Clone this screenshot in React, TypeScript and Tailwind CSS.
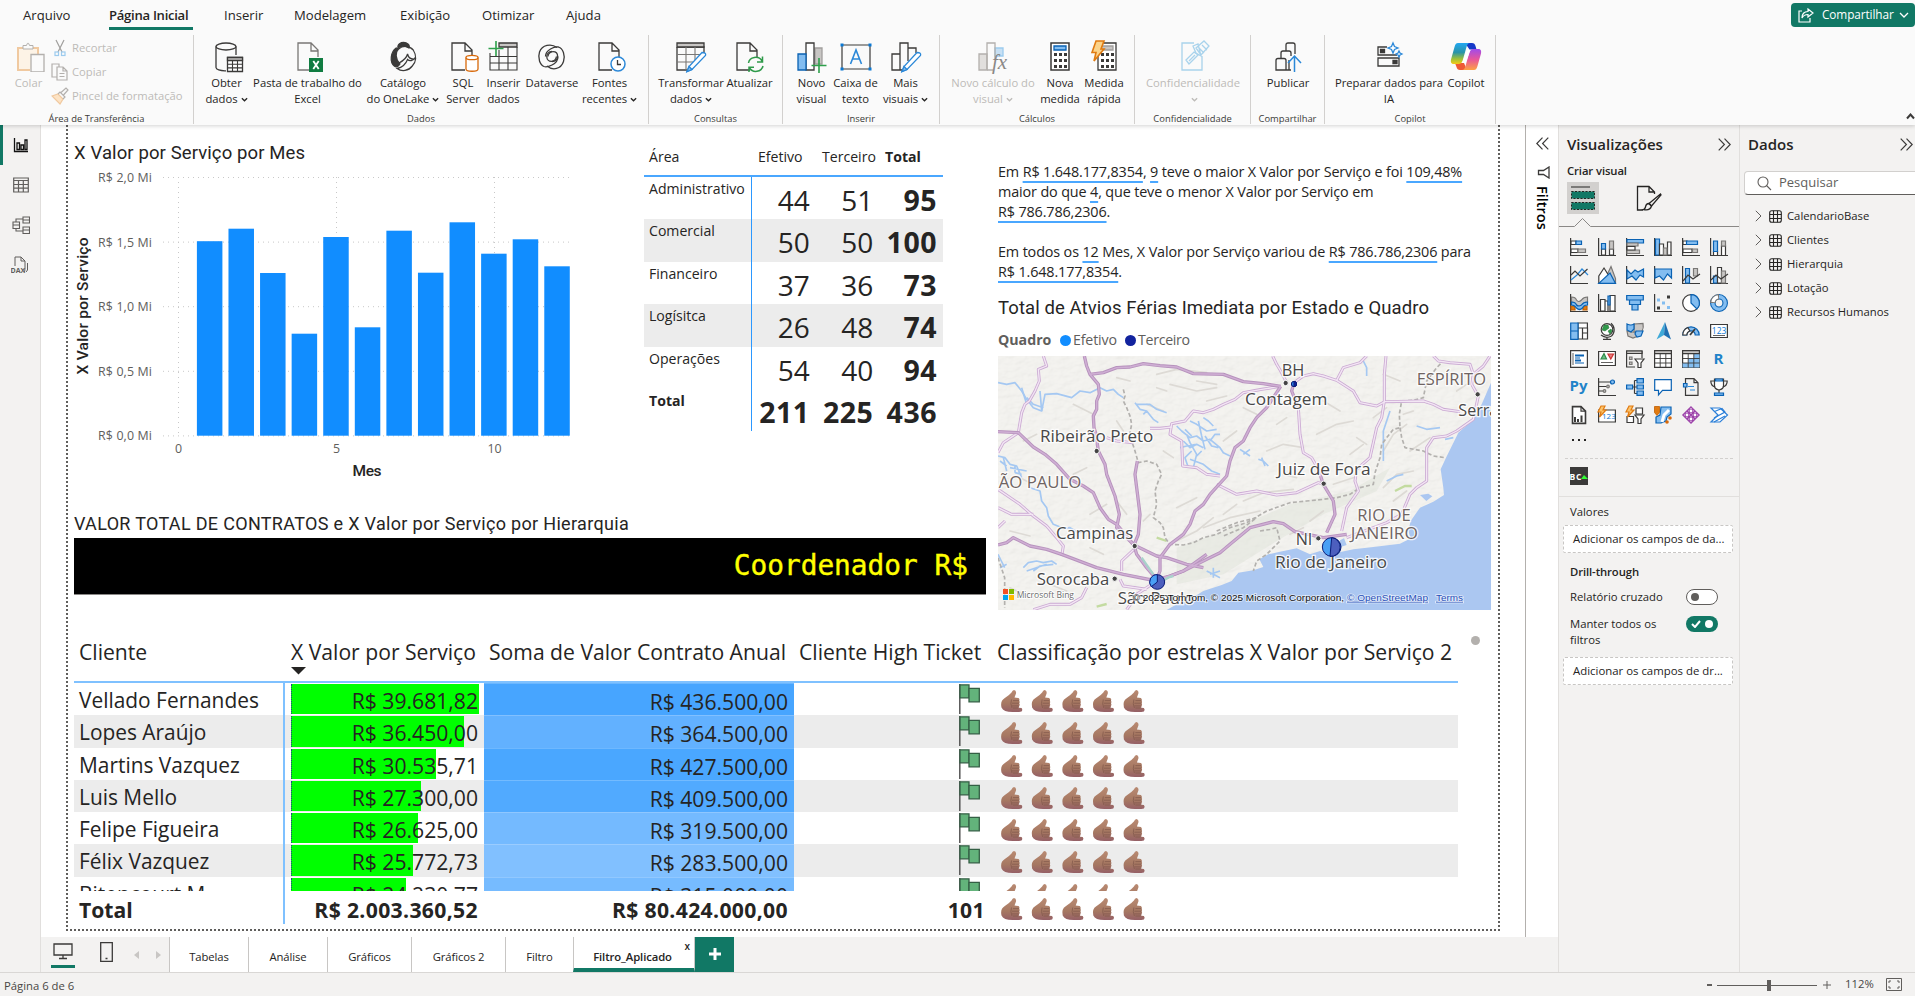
import React from "react";

type Kids = { children?: React.ReactNode };
const D = "#3b3a39";
const B = "#0a62b3";
const LB = "#83bdf0";
const G = "#c8c6c4";

/* ---------- ribbon icons (30 x 30) ---------- */
const R = ({ children }: Kids) => (
  <svg width="30" height="30" viewBox="0 0 30 30" fill="none" stroke={D} strokeWidth="1.3" className="block overflow-visible">
    {children}
  </svg>
);
const Doc = ({ x = 2 }: { x?: number }) => (
  <g transform={`translate(${x} 0)`}>
    <path d="M14 28H1V1h13l7 7v7M14 1v8h7" fill="none" />
  </g>
);
const Pencil = () => (
  <g>
    <path d="M26 10.500l-13 14-2 5 5-2 13.500-14q1-3-3.500-3z" fill="#fff" stroke="#2b88d8" />
    <path d="M11 29.500l2-5 3 3z" fill={LB} stroke="#2b88d8" />
  </g>
);
const icDb = (
  <R>
    <g transform="translate(3 0)">
      <ellipse cx="11" cy="4.500" rx="10" ry="3.500" />
      <path d="M1 4.500v21c0 2 4 3.500 10 3.300M21 4.500V13" />
      <path d="M12.500 15.500h15v14h-15z" fill="#fff" />
      <path d="M12.500 15.500h15v3h-15z" fill={G} />
      <path d="M12.500 22.200h15M12.500 25.900h15M17.500 18.500v11M22.500 18.500v11" strokeWidth="1.100" />
    </g>
  </R>
);
const icXls = (
  <R>
    <g stroke="#797775"><Doc x={4} /></g>
    <rect x="16" y="16" width="14" height="14" fill="#107c41" stroke="none" />
    <path d="M20.300 19l5.400 8M25.700 19l-5.400 8" stroke="#fff" strokeWidth="1.800" />
  </R>
);
const icLake = (
  <R>
    <g transform="translate(1.500 0) scale(.95 1)">
      <path d="M9 6C8 2 12 .5 15 .5s7 2 5.500 5.500C17 3.500 12 3.500 9 6z" fill={D} />
      <path d="M7 6C1 10 0 20 5 24c2 1.500 4 1 6-2C6 17 6 10 9.500 7z" fill={D} />
      <path d="M9.500 7c5-4 12-3 15.500 1 4 6 3 12-1 16-4 5-11 6-16 2.500 5-1 9-4 11-9 2 2 6 1.500 8-2M10 21c4-2 8-5 9-9 1 4 3 5.500 7.500 5" />
    </g>
  </R>
);
const icSql = (
  <R>
    <g transform="translate(3 0)">
      <Doc x={0} />
      <path d="M15 15.500v11.500c0 3 12 3 12 0V15.500" fill="#fff" stroke="#d8690a" />
      <ellipse cx="21" cy="15.500" rx="6" ry="2.200" fill="#fff" stroke="#d8690a" />
    </g>
  </R>
);
const icInsert = (
  <R>
    <path d="M10 1h18v4H10z" fill={G} />
    <path d="M1 11v17h27V5M1 14.500h27M1 21h27M10 8v20M19 5v23" strokeWidth="1.100" />
    <path d="M7-1v15M-.5 6.500h15" stroke="#2ea04b" strokeWidth="1.600" />
  </R>
);
const icVerse = (
  <R>
    <path d="M15 9.500c-3.500 0-5.200 2.600-5.200 5.200s2 4.600 4.600 4.600 5-2.200 5-4.800" />
    <path d="M15 19.500c3.500 0 5.600-2.300 5.600-5.200S18.500 9.700 16 9.700s-5 2.200-5 4.800" />
    <path d="M20 5.500C14 1 5 3 2.500 10c-2 6 .5 13 4.500 14.500 3 1 6-.5 8-1.500 3.500-1.700 6-5 6-8.500" />
    <path d="M10 24c6 5 14 3 16.500-4.500 2-6-.5-13-5-14.500-3-.6-6 .8-8 2-3.500 2-5 4.500-5 7.500" />
  </R>
);
const icRecent = (
  <R>
    <Doc x={3} />
    <circle cx="23" cy="22" r="7" fill="#fff" stroke="#2b88d8" strokeWidth="1.500" />
    <path d="M22.500 18v4.500H26" />
  </R>
);
const icTransform = (
  <R>
    <path d="M1 5h27v10M1 5v23h13" /><path d="M1 1h27v4H1z" fill={G} />
    <path d="M1 12.500h26M1 20h16M10 5v23M19 5v15" stroke="#797775" strokeWidth="1.100" />
    <Pencil />
  </R>
);
const icRefresh = (
  <R>
    <Doc x={1} />
    <path d="M13.500 21c1-6 10-8 13.500-2M27.500 14.500V20H22M28 24c-1.500 6-10 7.500-13.500 2M14 30v-4.700h5" stroke="#2f9a4a" strokeWidth="1.500" fill="none" />
  </R>
);
const icNewVis = (
  <R>
    <path d="M18 6h7v16h-7z" fill={G} stroke="#a19f9d" />
    <path d="M9 1h8v27H9z" fill="#fff" />
    <path d="M1 12h8v16H1z" fill={LB} stroke={B} />
    <path d="M22 16v15M14.500 23.500h15" stroke="#2ea04b" strokeWidth="1.600" />
  </R>
);
const icText = (
  <R>
    <path d="M1 3h28v24H1z" strokeWidth="1.200" />
    <g fill="#0a78d4" stroke="none"><rect x="-.5" y="1.500" width="3" height="3" /><rect x="27.500" y="1.500" width="3" height="3" /><rect x="-.5" y="25.500" width="3" height="3" /><rect x="27.500" y="25.500" width="3" height="3" /></g>
    <path d="M9.500 22L15 8l5.500 14M11.500 17h7" stroke="#2b88d8" strokeWidth="1.600" />
  </R>
);
const icMore = (
  <R>
    <path d="M9 28H1V12h8M9 28V1h8v18M17 6h8v5M9 28h3" />
    <Pencil />
  </R>
);
const icFx = (
  <R>
    <path d="M1 12h8v16H1z" fill="#e1dfdd" stroke="#b3b0ad" />
    <path d="M17 6h8v8h-8z" fill="#c7e0f4" stroke="#9ccbee" />
    <path d="M9 28V1h8v16M9 28h6" stroke="#b3b0ad" fill="none" />
    <text x="14" y="27" fill="#8a8886" stroke="none" className="font-['Liberation_Serif'] text-[21px] italic">fx</text>
  </R>
);
const dots = [0, 1, 2].flatMap((r) => [0, 1, 2].map((c) => <rect key={`${r}${c}`} x={9 + c * 5} y={11 + r * 6} width="3" height="3" fill={D} stroke="none" />));
const icCalc = (
  <R><path d="M6 1h18v27H6z" fill="#fff" strokeWidth="1.500" /><path d="M9 4h12v4H9z" fill={LB} stroke={B} />{dots}</R>
);
const icQuick = (
  <R>
    <path d="M9 1h18v27H9z" fill="#fff" /><path d="M12 4h12v4H12z" fill={G} stroke="#a19f9d" /><g transform="translate(3 0)">{dots}</g>
    <path d="M7-1h8L12 7h3L5 19l2-8.500H3z" fill="#fbd38a" stroke="#e07b12" strokeWidth="1.600" />
  </R>
);
const icConf = (
  <R>
    <path d="M16 1H4v27h20V14" stroke="#a9d3ec" />
    <path d="M8 18l8-8 4 3-9 9zM11 19l6-6M18 6l8-7 5 5-8 9zM21 6l5 5M24 3l5 5M15 4l5-2 3 12-5-3z" stroke="#a9d3ec" fill="none" />
  </R>
);
const icPub = (
  <R>
    <g transform="translate(1 0)">
      <path d="M2 28V18.500q0-2 2-2h6q2 0 2 2V28zM7 16V11q0-2 2-2h6q2 0 2 2v3M12 9V3q0-2 2-2h5q2 0 2 2v9M12 28h3M17 28h-2V18" />
      <path d="M20.500 30V15M14 21l6.500-7 6.500 7" stroke="#2b88d8" strokeWidth="1.500" />
    </g>
  </R>
);
const icPrep = (
  <R>
    <path d="M13 5H4v8h19M4 16h21v8H4z" /><path d="M6.500 7.500h4v3h-4zM19 18.500h4v3h-4z" fill={D} />
    <path d="M19 1l1.500 3.500L24 6l-3.500 1.500L19 11l-1.500-3.500L14 6l3.500-1.500zM25 9l1 2 2 1-2 1-1 2-1-2-2-1 2-1z" stroke="#2b88d8" fill="#fff" />
  </R>
);
const icCopilot = (
  <R>
    <defs>
      <linearGradient id="cpA" x1="0" y1="0" x2="0" y2="1"><stop offset="0" stopColor="#22a7f2" /><stop offset=".45" stopColor="#2a94a8" /><stop offset=".75" stopColor="#9cc03a" /><stop offset="1" stopColor="#f5c916" /></linearGradient>
      <linearGradient id="cpB" x1="0" y1="0" x2="0" y2="1"><stop offset="0" stopColor="#a04bea" /><stop offset=".5" stopColor="#e8569a" /><stop offset="1" stopColor="#fda243" /></linearGradient>
    </defs>
    <g stroke="none">
      <path d="M14 1h7c2 0 3 1 3.500 3l1 3.500h-7z" fill="#1539c8" />
      <path d="M16 28H9c-2 0-3-1-3.500-3L4 21h9z" fill="#ee5a35" />
      <path d="M7 1h12c-2 0-3 2-3.500 4L11.500 19c-.8 2-2 3-4 3H3c-3 0-3.500-2-3-4.500L3.500 5C4.300 2.500 5 1 7 1z" fill="url(#cpA)" />
      <path d="M23 28H11c2 0 3-2 3.500-4l4-14c.8-2 2-3 4-3H27c3 0 3.500 2 3 4.500L26.500 24c-.8 2.500-1.500 4-3.500 4z" fill="url(#cpB)" />
      <path d="M16 8h3.500L14.500 21H11z" fill="#fff" />
    </g>
  </R>
);

const Chev = () => (
  <svg width="7" height="7" viewBox="0 0 8 8" fill="none" stroke="currentColor" strokeWidth="1.500" className="ml-[3px] inline-block"><path d="M1 2.500l3 3 3-3" /></svg>
);
const Btn = ({ icon, l1, l2, chev, w, off }: { icon: React.ReactNode; l1: string; l2?: string; chev?: boolean; w: string; off?: boolean }) => (
  <div className={`flex shrink-0 flex-col items-center ${w} ${off ? "text-[#bdbbb8]" : "text-[#252423]"}`}>
    {icon}
    <div className="mt-[3px] whitespace-nowrap text-center text-[11.25px] leading-4">
      <div>{l1}</div>
      <div>{l2}{chev && <Chev />}</div>
    </div>
  </div>
);
const Group = ({ label, w, pad = "", children }: Kids & { label: string; w: string; pad?: string }) => (
  <section className={`flex h-[89px] shrink-0 flex-col justify-between border-r border-[#d2d0ce] ${w}`}>
    <div className={`flex pt-[7px] ${pad}`}>{children}</div>
    <div className="text-center text-[9.4px] leading-[10px] text-[#3b3a39]">{label}</div>
  </section>
);

const Ribbon = () => (
  <header className="relative z-10 h-[125px] shrink-0 bg-[#fafafa] shadow-[0_1px_4px_rgba(0,0,0,0.18)]">
    <div className="flex h-[35px] justify-between">
      <nav className="flex pt-[5px] text-[13.1px] leading-5 text-[#252423]">
        <span className="ml-[23px] w-[86px]">Arquivo</span>
        <span className="mr-[31px] h-[25px] w-[84px] whitespace-nowrap border-b-[3px] border-[#117865] font-semibold tracking-[-0.28px]">Página Inicial</span>
        <span className="w-[70px]">Inserir</span>
        <span className="w-[106px]">Modelagem</span>
        <span className="w-[82px]">Exibição</span>
        <span className="w-[84px]">Otimizar</span>
        <span>Ajuda</span>
      </nav>
      <button className="mt-[3px] flex h-6 w-[124px] items-center rounded bg-[#117865] pl-[7px] text-[11.8px] text-white">
        <svg width="16" height="15" viewBox="0 0 16 15" fill="none" stroke="#fff" strokeWidth="1.200"><path d="M4 3H1v11h11v-4" /><path d="M10 1l5 4-5 4V6.500C7 6.500 5 8 4 10c0-4 2-6.500 6-6.500z" /></svg>
        <span className="ml-[8px] font-medium tracking-[-0.1px]">Compartilhar</span>
        <svg width="10" height="7" viewBox="0 0 10 7" fill="none" stroke="#fff" strokeWidth="1.300" className="ml-[5px]"><path d="M1 1l4 4 4-4" /></svg>
      </button>
    </div>
    <div className="flex">
      <section className="flex h-[89px] w-[194px] shrink-0 flex-col justify-between border-r border-[#d2d0ce]">
        <div className="flex h-[70px] text-[#bdbbb8]">
          <div className="flex w-[51px] flex-col items-center pl-[6px] pt-[7px] text-[11.25px] leading-4">
            <svg width="30" height="30" viewBox="0 0 30 30" fill="none" className="ml-[4px]"><path d="M14 28H2V6h20v8" fill="#fdf3e6" stroke="#f0c9a0" strokeWidth="2" /><path d="M7 7V3.500h3.500q1.500-5 3 0H17V7z" fill="#fafafa" stroke="#b3b0ad" /><path d="M15 12.500h13V30H15z" fill="#fafafa" stroke="#b3b0ad" strokeWidth="1.300" /></svg>
            <span className="mt-[3px]">Colar</span>
          </div>
          <div className="flex flex-col pt-px text-[11.25px] leading-6">
            <div className="flex items-center"><svg width="18" height="18" viewBox="0 0 18 18" fill="none" stroke="#a19f9d" strokeWidth="1.200" className="mr-[3px]"><path d="M5 1l6 12M13 1L7 13" /><rect x="4" y="13" width="3.500" height="3.500" stroke="#9ccbee" /><rect x="10.500" y="13" width="3.500" height="3.500" stroke="#9ccbee" /></svg>Recortar</div>
            <div className="flex items-center"><svg width="18" height="18" viewBox="0 0 18 18" fill="none" stroke="#b3b0ad" strokeWidth="1.200" className="mr-[3px]"><path d="M6 14H1V1h7v3M6 4h6l4 4v9H6zM12 4v4h4M8.500 10.500h5M8.500 13.500h5" /></svg>Copiar</div>
            <div className="flex items-center"><svg width="18" height="18" viewBox="0 0 18 18" fill="none" stroke="#b3b0ad" strokeWidth="1.200" className="mr-[3px]"><path d="M1 9l6-2 5 5-3 5z" fill="#fde3c4" stroke="#f0c9a0" /><path d="M7 7l2-2 5 5-2 2M10 5.500L15 1l2 2-4.500 5" /></svg>Pincel de formatação</div>
          </div>
        </div>
        <div className="text-center text-[9.4px] leading-[10px] text-[#3b3a39]">Área de Transferência</div>
      </section>
      <Group label="Dados" w="w-[455px]" pad="pl-[6px]">
        <Btn icon={icDb} l1="Obter" l2="dados" chev w="w-[53px]" />
        <Btn icon={icXls} l1="Pasta de trabalho do" l2="Excel" w="w-[109px]" />
        <Btn icon={icLake} l1="Catálogo" l2="do OneLake" chev w="w-[82px]" />
        <Btn icon={icSql} l1="SQL" l2="Server" w="w-[38px]" />
        <Btn icon={icInsert} l1="Inserir" l2="dados" w="w-[43px]" />
        <Btn icon={icVerse} l1="Dataverse" w="w-[54px]" />
        <Btn icon={icRecent} l1="Fontes" l2="recentes" chev w="w-[61px]" />
      </Group>
      <Group label="Consultas" w="w-[134px]" pad="pl-[8px]">
        <Btn icon={icTransform} l1="Transformar" l2="dados" chev w="w-[68px]" />
        <Btn icon={icRefresh} l1="Atualizar" w="w-[49px]" />
      </Group>
      <Group label="Inserir" w="w-[157px]" pad="pl-[8px]">
        <Btn icon={icNewVis} l1="Novo" l2="visual" w="w-[41px]" />
        <Btn icon={icText} l1="Caixa de" l2="texto" w="w-[47px]" />
        <Btn icon={icMore} l1="Mais" l2="visuais" chev w="w-[53px]" />
      </Group>
      <Group label="Cálculos" w="w-[195px]" pad="pl-[8px]">
        <Btn icon={icFx} l1="Novo cálculo do" l2="visual" chev w="w-[90px]" off />
        <Btn icon={icCalc} l1="Nova" l2="medida" w="w-[44px]" />
        <Btn icon={icQuick} l1="Medida" l2="rápida" w="w-[44px]" />
      </Group>
      <Group label="Confidencialidade" w="w-[116px]">
        <Btn icon={icConf} l1="Confidencialidade" chev w="w-[116px]" off />
      </Group>
      <Group label="Compartilhar" w="w-[74px]">
        <Btn icon={icPub} l1="Publicar" w="w-[74px]" />
      </Group>
      <Group label="Copilot" w="w-[171px]" pad="pl-[10px]">
        <Btn icon={icPrep} l1="Preparar dados para" l2="IA" w="w-[108px]" />
        <Btn icon={icCopilot} l1="Copilot" w="w-[46px]" />
      </Group>
      <svg width="9" height="7" viewBox="0 0 9 7" fill="none" stroke={D} strokeWidth="2" className="ml-auto mr-0 mt-[78px]"><path d="M1 5.500l3.500-4 3.500 4" /></svg>
    </div>
  </header>
);

/* ---------- left navigation ---------- */
const NavRail = () => (
  <nav className="flex w-[41px] shrink-0 flex-col border-r border-[#e1dfdd] bg-[#f3f2f1]">
    <div className="flex h-10 items-center border-l-[3px] border-[#117865] pl-[10px]">
      <svg width="16" height="16" viewBox="0 0 16 16" fill="none" stroke="#111" strokeWidth="1.300"><path d="M1.500 1v13.500H15M4 12.500V6h2.500v6.500zM8 12.500V8h2.500v4.500zM12 12.500V3h2v9.500z" /></svg>
    </div>
    <div className="flex h-10 items-center pl-[13px]">
      <svg width="16" height="16" viewBox="0 0 16 16" fill="none" stroke="#605e5c" strokeWidth="1.200"><path d="M.7 1h14.600v14H.7zM.7 3.500h14.600M.7 7.500h14.600M.7 11.200h14.600M5.500 3.500V15M10.300 3.500V15" /></svg>
    </div>
    <div className="flex h-10 items-center pl-[12px]">
      <svg width="18" height="18" viewBox="0 0 18 18" fill="none" stroke="#605e5c" strokeWidth="1.100"><path d="M1 6h6.500v6.500H1zM1 9h6.500M11 1h6.500v6H11zM11 4h6.500M11 11h6.500v6.500H11zM11 14h6.500M4 6V3h7M4 12.500V15h7" /></svg>
    </div>
    <div className="flex h-10 items-center pl-[11px]">
      <svg width="18" height="18" viewBox="0 0 18 18" fill="none" stroke="#605e5c" strokeWidth="1"><path d="M4 10V1h6l4 4v7q0 4-1 4M10 1v4h4M16.500 7v7l-1.500 2" /><text x="-.5" y="16.500" fill="#605e5c" stroke="none" className="text-[7px] font-bold">DAX</text></svg>
    </div>
  </nav>
);

/* ---------- column chart ---------- */
const tops = [116.2, 103.7, 148, 208.7, 112, 202.3, 105.7, 147.7, 97.3, 128.7, 114.3, 141.3];
const ColumnChart = () => (
  <svg width="560" height="385" viewBox="0 0 560 385" className="block shrink-0">
    <text x="0" y="33.500" textLength="231" fill="#252423" className="font-[Roboto] text-[18.5px]">X Valor por Serviço por Mes</text>
    {["2,0", "1,5", "1,0", "0,5", "0,0"].map((t, i) => (
      <g key={t}>
        <line x1="89" x2="495" y1={52.5 + i * 64.6} y2={52.5 + i * 64.6} stroke="#c8c8c8" strokeDasharray="1 4" />
        <text x="24" y={57 + i * 64.6} textLength="54" fill="#605e5c" className="text-[12.4px]">R$ {t} Mi</text>
      </g>
    ))}
    {[0, 5, 10].map((t, i) => (
      <g key={t}>
        <line x1={104.5 + i * 158} x2={104.5 + i * 158} y1="52" y2="311" stroke="#c8c8c8" strokeDasharray="1 4" />
        <text x={104.5 + i * 158} y="328" textAnchor="middle" fill="#605e5c" className="text-[12.4px]">{t}</text>
      </g>
    ))}
    {tops.map((y, i) => <rect key={i} x={122.9 + i * 31.58} y={y} width="25.500" height={310.7 - y} fill="#118dff" />)}
    <text x="278.500" y="350.500" textLength="29" fill="#252423" className="font-[Roboto] text-[15.5px] font-medium">Mes</text>
    <text transform="translate(14 249.500) rotate(-90)" textLength="137" fill="#252423" className="font-[Roboto] text-[15.5px] font-medium">X Valor por Serviço</text>
  </svg>
);

/* ---------- matrix ---------- */
const areas: [string, number, number, number][] = [
  ["Administrativo", 44, 51, 95],
  ["Comercial", 50, 50, 100],
  ["Financeiro", 37, 36, 73],
  ["Logísitca", 26, 48, 74],
  ["Operações", 54, 40, 94],
  ["Total", 211, 225, 436],
];
const Matrix = () => (
  <div className="ml-[10px] w-[299px] pt-[16px] text-[#252423]">
    <div className="flex h-[36px] items-start border-b-2 border-[#4aa7ff] pt-[6px] text-[14.1px] leading-5">
      <span className="w-[108px] pl-[5px]">Área</span>
      <span className="w-[64px] pl-[6px]">Efetivo</span>
      <span className="w-[64px] whitespace-nowrap pl-[6px]">Terceiro</span>
      <span className="pl-[5px] font-bold">Total</span>
    </div>
    {areas.map(([name, a, b, c], i) => (
      <div key={name} className={`flex h-[42.4px] ${i === 5 ? "bg-white" : i % 2 ? "bg-[#ececec]" : ""}`}>
        <div className={`w-[108px] border-r-[1.5px] border-[#2b98ff] pl-[5px] pt-[2px] text-[14.1px] leading-5 ${i === 5 ? "font-bold" : ""}`}>{name}</div>
        {[a, b, c].map((v, k) => (
          <div key={k} className={`w-[63.7px] pr-[6px] pt-[4px] text-right leading-[38px] ${k === 2 || i === 5 ? "text-[28.500px] font-bold tracking-[0.5px]" : "text-[28px]"}`}>{v}</div>
        ))}
      </div>
    ))}
  </div>
);

/* ---------- narrative ---------- */
const U = ({ children }: Kids) => <span className="underline decoration-[#4aa7ff] decoration-[1.500px] underline-offset-[4px]">{children}</span>;
const Narrative = () => (
  <div className="h-[170px] whitespace-pre pt-[37px] text-[14.4px] leading-5 tracking-[-0.142px] text-[#252423]">
    <p>Em <U>R$ 1.648.177,8354</U>, <U>9</U> teve o maior X Valor por Serviço e foi <U>109,48%</U></p>
    <p>maior do que <U>4</U>, que teve o menor X Valor por Serviço em</p>
    <p><U>R$ 786.786,2306</U>.</p>
    <p className="mt-5">Em todos os <U>12</U> Mes, X Valor por Serviço variou de <U>R$ 786.786,2306</U> para</p>
    <p><U>R$ 1.648.177,8354</U>.</p>
  </div>
);

/* ---------- map ---------- */
const mainRoads = [
  "M24 272L85 275 130 318 165 340 200 370 240 415 280 435 310 455 330 500 355 535 380 550 432 612 440 640 470 680 500 715",
  "M283 45L290 75 300 100 325 130 328 160 320 180 320 205 310 225 312 260 318 280 325 330 345 370 350 400 375 465 388 520 380 560 432 612",
  "M300 100L340 95 380 80 420 78 460 68 510 74 560 78 610 98 700 100 760 122 820 128 872 136",
  "M872 136L850 170 830 200 800 230 780 260 760 300 735 320 720 360 710 405 660 460 640 490 615 510 600 550 580 580 540 610 510 650 510 690 500 715",
  "M432 612L500 645 530 650 590 670 640 680M500 715L540 705 580 690 650 655 690 635 720 610 780 560 850 542 880 548 915 572 1000 590 1070 580",
  "M24 612L50 605 70 590 120 615 170 625 215 640 320 680 400 700 500 720 580 690 650 640",
  "M442 360L435 400 440 440 450 520 445 580 432 612",
  "M985 385L1000 430 1030 480 1035 520 1010 575M912 125L905 150 925 200",
];
const minorRoads = [
  "M85 275L95 215 105 190 118 180 135 150 148 120 145 85 170 75 160 45",
  "M24 335L40 305 85 275M24 560L45 540",
  "M872 136L815 145 760 155 735 175 700 190 670 205 640 215 610 210 585 240 545 248 540 280 575 300 578 375 620 380 650 400 690 405",
  "M545 258L510 262 480 262",
  "M848 45L860 70 872 90 890 125M925 200L930 280 940 335 965 350 985 385",
  "M912 125L940 105 970 98 1000 105 1040 118 1090 150 1110 185 1160 195 1185 182 1300 180 1330 190 1360 205 1410 212",
  "M1130 45L1110 65 1060 80 1040 118M1188 45L1183 100 1183 180 1175 230 1160 260 1140 350 1100 385 1095 420 1105 450 1070 500 1055 570",
  "M1330 45L1345 60 1380 65 1440 70 1450 100 1445 130 1462 160M1500 45L1480 75 1450 100",
  "M1465 165L1450 235 1400 270 1370 285 1330 290 1310 320 1310 420 1280 440 1260 460 1235 520 1190 545 1150 560 1070 590",
  "M680 430L740 460 800 450 860 462 920 455 985 425 1000 430",
  "M24 445L90 490 130 525 170 555 200 590 220 615 215 645",
  "M24 500L65 520 130 520M380 300L430 305M350 290L380 300",
  "M500 720L470 740 440 760 425 785 410 806M130 806L180 790 240 790 275 770 290 740 M395 690L395 660 432 625M390 715L400 735 470 745",
];
const rivers = [
  "M24 125L50 130 75 125 95 150 110 175 130 200 155 210 165 160 200 158 220 163 245 170 270 150 300 155 330 140 350 150 370 145 385 160 400 170",
  "M110 170L130 190 160 200M150 150l5 60M95 140l15 50", "M435 185L450 205 470 210 490 235 505 245M440 190l40 0 20 15 30 10M470 210l-10 10",
  "M560 255L575 270 600 290 620 285 640 300 660 295 690 320 700 335 720 345M600 240L620 250 650 270 680 265M600 355L620 362 640 370 665 390 690 400M590 280l10 25 20 35-10 40M625 240l10 45 10 40M660 300l15-20 15 0M570 320l20-5 30-5M640 230l15 10 15 15M605 330l-20 20 10 30M580 300l20 20 20-10 20 10M585 265l20 20M645 285l20 30 20 5M620 345l15-15",
  "M750 325l12 8 18 12M760 340l20-15M805 355l15 5 15 15M815 350l10 25M120 440L150 450 155 480 170 500 175 525 190 550 220 562 240 560 265 575 290 570",
  "M24 345L45 350 60 370 80 375 95 410M40 350l10 40M60 380l50 10M30 360l20 15M75 375l0 20M75 395l20 5",
  "M100 680l15-15 25-5 20 5 25-5 15 10M130 690l20-15 40-5M110 690l60-20M24 640l10 20 10 20M30 680l20-10M650 690l20 10 20 10M670 680l0 30M660 700l30-10M1120 60l10 20 0 25M1200 210l-20 60 0 90M1240 400l-20 5-30 15M1390 290l-25 5M1280 255l30 10 40-5",
];
const borders = [
  "M400 145L405 165 400 180 410 200 420 225 425 250 420 275 425 300 435 330 445 365 470 360 500 370 515 400 505 420 495 450 500 490 490 530 510 545 520 560 525 590 540 610 580 612 610 605 640 590 680 580 720 560 770 545 830 510 900 485 950 480 1000 475 1040 470 1080 460 1110 440 1150 430 1155 395 1170 350 1175 310 1190 290 1210 265 1230 260 1228 220 1235 180 1270 178 1300 170 1310 120 1340 80 1360 60",
  "M1230 260L1235 290 1245 320 1300 330 1330 345 1365 350", "M24 650l20 60 0 90", "M810 570L840 565 860 560 870 600 850 620 830 640 800 660 790 690",
  "M680 570L740 545 800 530 760 560 700 585",
];
const ridges = [
  "M500 100l60-15 90 10M540 130l80 20 60-10M470 190l50 20M100 300l40-20M250 190l60 30M650 180l60-15M830 330l50-20 60 10M760 480l60-25 90-10M640 560l80-30 90-20M560 500l60-30M980 280l60-30 50-10M1000 180l50 30M1180 330l30-50 40-30M1260 330l60-40M1150 230l40-30M1080 340l40-30M1030 430l60-20M1180 440l40-40 50-10M300 520l50-30M60 570l60 15M90 410l30 15M250 400l40-20M380 240l20 30M760 200l40 20M520 330l30 20M700 300l40-30",
  "M380 480l30 40M460 540l20-20M560 600l60-30 50-40M700 520l40-30M880 400l40 10M860 250l30-20M1240 220l30-10M1100 290l30 20M1210 480l40-30M1180 100l50 20M1400 150l30-20M960 540l40-30M900 580l40-20M300 620l40 20M180 730l50 20M60 740l40 20M500 140l30 10M620 120l60 10M380 110l40 10",
];
const cities: [string, number, number, number][] = [
  ["BH", 875, 105, 68], ["Contagem", 765, 193, 247], ["Serra", 1405, 226, 120], ["Ribeirão Preto", 150, 303, 340],
  ["Juiz de Fora", 862, 403, 280], ["Campinas", 198, 595, 232], ["Sorocaba", 140, 733, 218], ["São Paulo", 383, 789, 230],
  ["NI", 917, 612, 50], ["Rio de Janeiro", 855, 681, 336],
];
const states: [string, number, number, number][] = [["ESPÍRITO", 1280, 132, 208], ["ÃO PAULO", 26, 440, 248], ["RIO DE", 1102, 541, 160], ["JANEIRO", 1082, 594, 202]];
const MapView = () => (
  <svg width="493" height="254" viewBox="24 45 1479 762" className="mt-[6px] block font-['Open_Sans']" preserveAspectRatio="none">
    <defs>
      <filter id="relief" x="0" y="0" width="100%" height="100%">
        <feTurbulence type="fractalNoise" baseFrequency="0.035 0.06" numOctaves="3" seed="4" />
        <feDiffuseLighting surfaceScale="5" lightingColor="#fff"><feDistantLight azimuth="225" elevation="62" /></feDiffuseLighting>
      </filter>
    </defs>
    <rect x="24" y="45" width="1479" height="762" fill="#f3f2ee" />
    <rect x="24" y="45" width="1479" height="762" filter="url(#relief)" opacity=".14" />
    <path d="M560 620L760 550 900 490 1080 450 1200 380 1160 450 1000 520 860 600 700 700 560 730z" fill="#dfe3da" opacity=".5" />
    {ridges.map((d) => <path key={d} d={d} fill="none" stroke="#dddad5" strokeWidth="5" strokeLinejoin="round" strokeLinecap="round" />)}
    <path d="M1215 450l30-15 20 0M320 797l30-8M500 590l30 10" stroke="#c3dba0" strokeWidth="7" fill="none" />
    {rivers.map((d) => <path key={d} d={d} fill="none" stroke="#a5c8f2" strokeWidth="5" strokeLinejoin="round" />)}
    <path d="M1503 125L1475 190 1445 240 1405 275 1388 310 1368 350 1352 385 1360 440 1362 462 1330 482 1290 500 1262 540 1255 570 1262 592 1230 608 1150 618 1090 625 1020 640 990 630 960 640 920 622 870 632 835 640 808 655 820 678 790 688 745 695 725 720 695 732 640 750 605 772 560 790 530 807H1503z" fill="#abc7f1" />
    <path d="M1290 462l25-4 12 8-18 14zM1050 598l12-6 8 20-18 6z" fill="#abc7f1" />
    {borders.map((d) => <path key={d} d={d} fill="none" stroke="#b3b1ae" strokeWidth="5" strokeDasharray="12 7" strokeLinejoin="round" />)}
    {minorRoads.map((d) => <path key={d} d={d} fill="none" stroke="#cbaad3" strokeWidth="9" strokeLinejoin="round" />)}
    {minorRoads.map((d) => <path key={d} d={d} fill="none" stroke="#f3e6f4" strokeWidth="4" strokeLinejoin="round" />)}
    {mainRoads.map((d) => <path key={d} d={d} fill="none" stroke="#b792bd" strokeWidth="10" strokeLinejoin="round" />)}
    {mainRoads.map((d) => <path key={d} d={d} fill="none" stroke="#cfafd4" strokeWidth="4.500" strokeLinejoin="round" />)}
    <path d="M505 740q15-30 45-35M490 700l-35-50" stroke="#a8d3cb" strokeWidth="7" fill="none" />
    {[[887, 126], [1463, 160], [320, 330], [1001, 428], [434, 615], [374, 713], [985, 592]].map(([x, y]) => <circle key={x} cx={x} cy={y} r="8" fill="#444" stroke="#fff" strokeWidth="3" />)}
    {states.map(([t, x, y, w]) => <text key={t} x={x} y={y} textLength={w} lengthAdjust="spacingAndGlyphs" fill="#6f6462" stroke="#fff" strokeWidth="7" strokeOpacity=".8" paintOrder="stroke" className="text-[47px] font-medium">{t}</text>)}
    {cities.map(([t, x, y, w]) => <text key={t} x={x} y={y} textLength={w} lengthAdjust="spacingAndGlyphs" fill="#484848" stroke="#fff" strokeWidth="8" strokeOpacity=".85" paintOrder="stroke" className="text-[50px] font-medium">{t}</text>)}
    <g stroke="#0c1c78" strokeWidth="3">
      <circle cx="1025" cy="618" r="28" fill="#4aa0f5" /><path d="M1025 590a28 28 0 1 1-5 56z" fill="#4d5fbe" />
      <circle cx="502" cy="723" r="22" fill="#4d5fbe" /><path d="M502 701v22l-18 14a22 22 0 0 1 18-36z" fill="#4aa0f5" />
      <circle cx="912" cy="129" r="8" fill="#2b7be0" /><path d="M912 121a8 8 0 0 1 0 16z" fill="#12239e" />
    </g>
    <rect x="39" y="744" width="15" height="15" fill="#f25022" /><rect x="57" y="744" width="15" height="15" fill="#7fba00" />
    <rect x="39" y="762" width="15" height="15" fill="#00a4ef" /><rect x="57" y="762" width="15" height="15" fill="#ffb900" />
    <text x="80" y="770" textLength="172" lengthAdjust="spacingAndGlyphs" fill="#6b6b6b" stroke="#fff" strokeWidth="5" paintOrder="stroke" className="text-[27px]">Microsoft Bing</text>
    <g stroke="#fff" strokeWidth="5" strokeOpacity=".6" paintOrder="stroke" className="font-['Liberation_Sans'] text-[26px]">
      <text x="428" y="779" textLength="634" lengthAdjust="spacingAndGlyphs" fill="#111">© 2025 TomTom, © 2025 Microsoft Corporation,</text>
      <text x="1071" y="779" textLength="243" lengthAdjust="spacingAndGlyphs" fill="#2a50b8" className="underline">© OpenStreetMap</text>
      <text x="1338" y="779" textLength="81" lengthAdjust="spacingAndGlyphs" fill="#2a50b8" className="underline">Terms</text>
    </g>
  </svg>
);
const MapVisual = () => (
  <div>
    <h2 className="h-[27px] whitespace-nowrap font-[Roboto] text-[18.5px] leading-[26px] tracking-[0.09px] text-[#252423]">Total de Atvios Férias Imediata por Estado e Quadro</h2>
    <div className="mt-[8px] flex h-[20px] items-center text-[14.2px] leading-5 text-[#605e5c]">
      <b className="w-[62px]">Quadro</b>
      <i className="mr-[2px] size-[11px] rounded-full bg-[#118dff]" /><span className="w-[52px] tracking-[-0.15px]">Efetivo</span>
      <i className="mr-[2px] size-[11px] rounded-full bg-[#12239e]" /><span className="tracking-[-0.3px]">Terceiro</span>
    </div>
    <MapView />
  </div>
);

/* ---------- client table ---------- */
const Flag = () => (
  <svg width="21" height="30" viewBox="0 0 21 30" className="mr-[11px] block"><path d="M.8 0v30" stroke="#555" strokeWidth="1.500" /><path d="M1 .8h9v13H1z" fill="#63b37b" stroke="#345f45" strokeWidth="1.300" /><path d="M10 4.300h10.300v13.500H10z" fill="#63b37b" stroke="#345f45" strokeWidth="1.300" /></svg>
);
const Hands = () => (
  <svg width="150" height="24" viewBox="0 0 150 24" className="ml-[10px] block">
    <defs><linearGradient id="skin" x1="0" y1="0" x2="0" y2="1"><stop offset="0" stopColor="#b98a72" /><stop offset=".6" stopColor="#a67862" /><stop offset="1" stopColor="#955f66" /></linearGradient></defs>
    {[0, 1, 2, 3, 4].map((i) => (
      <g key={i} transform={`translate(${i * 30.6} 1)`}>
        <path d="M13 0q2.500.5 2 3.500L13.500 7.500 17.500 8q1.500 1.200.7 2.700 1 1.300 0 2.600 1 1.400 0 2.700l-.4 1.800 2.700.2q1.500 1.700 0 3.500-3 .8-9 .5Q2.500 22 .5 17.500-1 11 3.500 8.300 8 5.500 10.500 2.500 11.500 0 13 0z" fill="url(#skin)" />
        <path d="M12 10.600h6M11 13.200h7M11 15.900h6.500M12 18h5M10.500 9.500q-1.500 4 .5 8.500" stroke="#845b4c" strokeWidth=".8" fill="none" />
      </g>
    ))}
  </svg>
);
const clients: [string, string, number, string, string][] = [
  ["Vellado Fernandes", "R$ 39.681,82", 187, "R$ 436.500,00", "bg-[#47a5ff]"],
  ["Lopes Araújo", "R$ 36.450,00", 171.5, "R$ 364.500,00", "bg-[#62b1ff]"],
  ["Martins Vazquez", "R$ 30.535,71", 143.7, "R$ 427.500,00", "bg-[#4aa7ff]"],
  ["Luis Mello", "R$ 27.300,00", 129, "R$ 409.500,00", "bg-[#51aaff]"],
  ["Felipe Figueira", "R$ 26.625,00", 125.7, "R$ 319.500,00", "bg-[#74baff]"],
  ["Félix Vazquez", "R$ 25.772,73", 121.2, "R$ 283.500,00", "bg-[#81c0ff]"],
  ["Bitencourt M", "R$ 24.230,77", 114.3, "R$ 315.000,00", "bg-[#76bbff]"],
];
const ClientTable = () => (
  <div className="flex w-[1411px] text-[21.150px] text-[#252423]">
    <div className="w-[1384px]">
      <div className="flex h-[48px] whitespace-nowrap border-b-2 border-[#7fc1ff] leading-[34px]">
        <span className="w-[217px] pl-[5px]">Cliente</span>
        <div className="w-[194px]">
          <div className="h-[32px]">X Valor por Serviço</div>
          <svg width="15" height="8" viewBox="0 0 16 9" preserveAspectRatio="none" className="block"><path d="M0 0h16L8 8.500z" fill="#252423" /></svg>
        </div>
        <span className="w-[309px] pl-[4px]">Soma de Valor Contrato Anual</span>
        <span className="w-[197px] pl-[5px]">Cliente High Ticket</span>
        <span className="pl-[6px]">Classificação por estrelas X Valor por Serviço 2</span>
      </div>
      <div className="h-[208px] overflow-hidden">
        {clients.map(([n, v, w, s, c], i) => (
          <div key={n} className={`flex h-[32.300px] leading-[35px] ${i % 2 ? "bg-[#ececec]" : ""}`}>
            <div className="w-[211px] overflow-hidden whitespace-nowrap border-r-2 border-[#7fc1ff] pl-[5px] text-[20.900px]">{n}</div>
            <div className="relative ml-[6px] w-[193px] pr-[6px] text-right">
              <div className="absolute inset-y-[1px] left-0 border-l border-dotted border-[#20408a] bg-[#00ff00]" style={{ width: w + 1 }} />
              <span className="relative">{v}</span>
            </div>
            <div className={`w-[310px] border-t border-white/20 pr-[6px] text-right ${c}`}>{s}</div>
            <div className="flex w-[197px] justify-end pt-px"><Flag /></div>
            <div className="pt-[6px]"><Hands /></div>
          </div>
        ))}
      </div>
      <div className="flex h-[33px] font-bold leading-[37px]">
        <div className="w-[211px] border-r-2 border-[#7fc1ff] pl-[5px]">Total</div>
        <div className="w-[199px] whitespace-nowrap pr-[6px] text-right tracking-[0.35px]">R$ 2.003.360,52</div>
        <div className="w-[310px] pr-[6px] text-right tracking-[0.35px]">R$ 80.424.000,00</div>
        <div className="w-[197px] pr-[6px] text-right tracking-[0.35px]">101</div>
        <div className="pt-[6px]"><Hands /></div>
      </div>
    </div>
    <div className="ml-[13px] mt-[1px] size-[9px] rounded-full bg-[#b3b0ad]" />
  </div>
);

/* ---------- report canvas ---------- */
const Canvas = () => (
  <main className="h-[812px] border-r border-[#b3b0ad] bg-white pl-[25px]">
    <div className="h-[806px] w-[1434px] border-x-2 border-b-2 border-dotted border-[#605e5c] pl-[6px]">
      <div className="flex h-[510px] gap-[12px]">
        <div className="w-[912px] shrink-0">
          <div className="flex"><ColumnChart /><Matrix /></div>
          <h2 className="h-[28px] whitespace-nowrap font-[Roboto] text-[18px] leading-[27px] tracking-[0.32px] text-[#252423]">VALOR TOTAL DE CONTRATOS e X Valor por Serviço por Hierarquia</h2>
          <div className="h-[57px] overflow-hidden border-b border-[#8a8886] bg-black pr-[18px] text-right font-['DejaVu_Sans_Mono'] text-[27.800px] leading-[55px] text-[#ffff00] [-webkit-text-stroke:0.4px]">Coordenador R$</div>
        </div>
        <div className="w-[493px] shrink-0"><Narrative /><MapVisual /></div>
      </div>
      <ClientTable />
    </div>
  </main>
);

const PageTabs = () => (
  <div className="flex h-[35px] bg-[#f3f2f1] text-[11.3px] text-[#252423]">
    <div className="ml-[10px] flex h-[31px] w-6 flex-col items-center justify-between border-b-[3px] border-[#117865] pt-[6px]">
      <svg width="20" height="17" viewBox="0 0 20 17" fill="none" stroke={D} strokeWidth="1.300"><path d="M1 1h18v11H1zM10 12v3M6 15.500h8" /></svg>
    </div>
    <svg width="13" height="20" viewBox="0 0 13 20" fill="none" stroke={D} strokeWidth="1.300" className="ml-[25px] mt-[5px]"><path d="M.7.700h11.600v18.600H.7zM5.500 16.500h2" /></svg>
    <svg width="28" height="9" viewBox="0 0 28 9" fill="#c8c6c4" className="ml-[21px] mr-[7px] mt-[14px]"><path d="M5 0v8L0 4zM22 0v8l5-4z" /></svg>
    {[["Tabelas", "w-[79px]"], ["Análise", "w-[79px]"], ["Gráficos", "w-[84px]"], ["Gráficos 2", "w-[94px]"], ["Filtro", "w-[68px]"]].map(([t, w]) => (
      <div key={t} className={`border-l border-[#c8c6c4] bg-white pt-[2px] text-center leading-[35px] tracking-[-0.1px] ${w}`}>{t}</div>
    ))}
    <div className="relative w-[122px] border-b-4 border-l border-r border-[#c8c6c4] border-b-[#117865] bg-white pr-[3px] pt-[2px] text-center font-semibold leading-[35px] tracking-[-0.1px]">
      Filtro_Aplicado<span className="absolute right-[4px] top-[3px] text-[10px] leading-3">x</span>
    </div>
    <button className="flex w-[39px] items-center justify-center bg-[#117865] pb-[2px]">
      <svg width="12" height="12" viewBox="0 0 12 12" stroke="#fff" strokeWidth="3"><path d="M6 0v12M0 6h12" /></svg>
    </button>
  </div>
);

/* ---------- right panes ---------- */
const Dbl = ({ left }: { left?: boolean }) => (
  <svg width="13" height="13" viewBox="0 0 13 13" fill="none" stroke={D} strokeWidth="1.200">{left ? <path d="M6.500.700L.8 6.500l5.700 5.800M12.300.700L6.600 6.500l5.700 5.800" /> : <path d="M.7.700l5.700 5.800L.7 12.300M6.500.700l5.700 5.800-5.700 5.800" />}</svg>
);
const Filters = () => (
  <aside className="flex h-[812px] w-[32px] flex-col items-center bg-white pt-[12px]">
    <Dbl left />
    <svg width="13" height="13" viewBox="0 0 13 13" fill="none" stroke={D} strokeWidth="1.300" className="ml-[3px] mt-[16px]"><path d="M12 1v11L6.500 8.500H1.500v-4h5z" /></svg>
    <span className="mt-[7px] text-[14.500px] font-semibold leading-5 [writing-mode:vertical-rl]">Filtros</span>
  </aside>
);

const Ax = () => <path d="M.6 0v17.500H18" />;
const st = { b: { fill: LB, stroke: B }, g: { fill: G, stroke: "#797775" }, w: { fill: "#fff", stroke: D } };
const lbl = "font-['Open_Sans']";
const vizIcons: React.ReactNode[] = [
  <><Ax /><path d="M1 3h5v3.500H1z" {...st.w} /><path d="M6 3h5.500v3.500H6z" {...st.b} /><path d="M1 11h7v3.500H1z" {...st.w} /><path d="M8 11h7.500v3.500H8z" {...st.g} /></>,
  <><Ax /><path d="M3.500 11h4v6h-4zM11.500 11h4v6h-4z" {...st.w} /><path d="M3.500 5.500h4V11h-4z" {...st.b} /><path d="M11.500 3h4v8h-4z" {...st.g} /></>,
  <><Ax /><path d="M1 1.500h16.500v3.500H1z" {...st.b} /><path d="M1 5h11v3H1zM1 12h12.500v3.500H1z" {...st.g} /><path d="M1 8.500h8V12H1z" {...st.w} /></>,
  <><Ax /><path d="M1.500 1h4v16h-4z" {...st.b} /><path d="M5.500 6h4v11h-4zM13.500 4h3.500v13h-3.500z" {...st.w} /><path d="M9.500 10h3.500v7H9.500z" {...st.g} /></>,
  <><Ax /><path d="M1 3h4v3.500H1zM1 11h9v3.500H1z" {...st.w} /><path d="M4.500 3h11v3.500h-11z" {...st.b} /><path d="M10.500 11h5v3.500h-5z" {...st.g} /></>,
  <><Ax /><path d="M3.500 13.500h4v4h-4zM11.500 8h4v9.500h-4z" {...st.w} /><path d="M3.500 3h4v10.500h-4z" {...st.b} /><path d="M11.500 3h4v5h-4z" {...st.g} /></>,
  <><Ax /><path d="M1 14l6-5 5-6 6 6" stroke="#2b88d8" /><path d="M1 9l4-4 5 5 7.500-7" /></>,
  <><path d="M9 9l4-8.500 4.500 12V17H9z" {...st.g} /><path d="M.8 10L6 2l5 8-5 7H.8z" {...st.w} /><path d="M.8 17.400L12 7l5.500 10.400z" {...st.b} /></>,
  <><Ax /><path d="M1 4l4 4 4-4 3 2 5.500-3v8L14 9l-4 5-4-4-5 3z" {...st.b} /></>,
  <><Ax /><path d="M1 3h16.500v9l-4-4-4 6-4-4L1 12z" {...st.b} /></>,
  <><Ax /><path d="M3.500 2.500h4V17h-4z" {...st.b} /><path d="M11.500 2.500h4V10h-4z" {...st.g} /><path d="M1 15l5-6 5 4 7-5" /></>,
  <><Ax /><path d="M3.500 10h4v7h-4z" {...st.b} /><path d="M7.500 1.500h4V17h-4z" {...st.w} /><path d="M11.500 5h4v12h-4z" {...st.g} /><path d="M1 14l5-5 5 4 7-5" /></>,
  <><Ax /><path d="M1.500 3q4 0 5 3 2 3 5 0 2-3 6-3v5q-4 0-5 3-3 3-6 0-2-3-5-3z" {...st.g} /><path d="M1 12h4v4H1zM13 12h4v4h-4z" fill="#e07b12" stroke="#c05e00" /><path d="M1.500 8q4 0 5 3 2 2 5 0 2-3 6-3v3q-4 0-5 3-3 3-6 0-2-3-5-3z" {...st.b} /></>,
  <><Ax /><path d="M2.500 5.500H7V17H2.500zM7 7h3v10M12 17V1.500h5V17z" {...st.w} /><path d="M10 2h2v9h-2z" {...st.b} /></>,
  <><path d="M.7 1.500h16.600v4.500H.7zM3.500 6h11v4.500h-11zM6 10.500h6V16H6z" {...st.b} /></>,
  <><Ax /><g stroke="none"><path d="M13 1.500h3v3h-3zM3 12.500h3v3H3z" fill={D} /><path d="M3 4.500h3v3H3zM8 7.500h3v3H8zM13 12h3v3h-3z" fill={LB} /></g></>,
  <><circle cx="9" cy="9" r="8.300" {...st.w} /><path d="M9 .7a8.300 8.300 0 0 1 5.900 14.200L9 9z" {...st.b} /></>,
  <><circle cx="9" cy="9" r="6.200" stroke={B} strokeWidth="5.600" /><circle cx="9" cy="9" r="6.200" stroke={LB} strokeWidth="3.400" /><path d="M2.800 9A6.200 6.200 0 0 1 9 2.800" stroke="#797775" strokeWidth="5.600" /><path d="M3 8A6.200 6.200 0 0 1 8 2.900" stroke="#fff" strokeWidth="3.400" /></>,
  <><path d="M8 1h9.400v5H8zM8 6h4.500v11H8zM12.500 6h5v5h-5zM12.500 11h5v6h-5z" {...st.w} /><path d="M.7 1H8v8H.7zM.7 9H8v8.300H.7z" {...st.b} /></>,
  <><circle cx="9" cy="7.500" r="5.800" fill="#fff" /><path d="M6 3l4 0 1 3-4 3-3-1zM10 9l3-2 1 2-2 3z" fill="#2f9a4a" stroke="#2f7a40" strokeWidth=".6" /><path d="M13 1.200A8.500 8.500 0 0 1 13.500 14Q8 17 3 13M9 15v2.500M5 17.300h8" /></>,
  <><path d="M8 2l9-.5q1 4-1 8l-8 .5zM1 9l4 1 3 0 5 2-1 2-5 2-5-2z" {...st.g} /><path d="M1 2q4 2 7 0v5l-3 3-4-2zM10 9l7 0-2 5-4 1-2-3z" {...st.b} /></>,
  <><path d="M11 0L2.500 17.500 10 13z" fill="#3fa9d8" stroke="none" /><path d="M11 0l6 17.500L10 13z" fill="#1f6fb2" stroke="none" /></>,
  <><path d="M.8 13a8.200 8.200 0 0 1 16.400 0h-4a4.200 4.200 0 0 0-8.400 0z" {...st.b} /><path d="M.8 13a8.200 8.200 0 0 1 5-7.500l2 3.500a4.200 4.200 0 0 0-3 4z" {...st.w} /><path d="M8 13l5-6" strokeWidth="1.800" /></>,
  <><path d="M.6 2.500h16.800v13H.6z" {...st.w} /><text x="1.800" y="12" fill="#0a78d4" stroke="none" className={`${lbl} text-[8.500px]`}>123</text><path d="M3 13.500h12" strokeWidth=".8" /></>,
  <><path d="M.6.600h16.800v16.800H.6z" {...st.w} /><path d="M3 3v12" strokeWidth=".8" /><path d="M5 5.500h9M5 10.500h6" stroke={B} strokeWidth="1.800" /><path d="M5 8h5M5 13h9" stroke={B} /></>,
  <><path d="M.6 1.500h16.800v14H.6z" {...st.w} /><path d="M3 9l3-5.500L8.500 9z" fill="#6cc186" stroke="#2f8a4a" /><path d="M10 4h5.500l-2.700 5z" fill="#e98080" stroke="#c33" /><path d="M3 12.500h12" strokeWidth=".8" /></>,
  <><path d="M16 8V1H.6v16H9" /><path d="M.6 1H16v2.500H.6z" fill={G} /><path d="M3.500 7H6v2.500H3.500zM3.500 12H6v2.500H3.500z" {...st.g} /><path d="M9 9h9l-3 4v4.500h-3V13z" {...st.w} /></>,
  <><path d="M.6.600h16.800v16.800H.6z" {...st.w} /><path d="M.6.600h16.800v3H.6z" fill={G} /><path d="M.6 8.500h17M.6 13h17M6.200 4v13.500M11.800 4v13.500" strokeWidth=".9" /></>,
  <><path d="M.6.600h16.800v16.800H.6z" {...st.w} /><path d="M12 4h5.500v13.500H.6V13h5.600V8.500H12z" fill={LB} stroke="none" /><path d="M.6.600h16.800v3H.6z" fill={G} /><path d="M.6 8.500h17M.6 13h17M6.200 4v13.500M11.800 4v13.500" strokeWidth=".9" /></>,
  <text x="3.500" y="14" fill="#1f83c9" stroke="none" className={`${lbl} text-[15px] font-bold`}>R</text>,
  <text x="-.5" y="13" fill="#1f83c9" stroke="none" className={`${lbl} text-[15px] font-bold`}>Py</text>,
  <><Ax /><path d="M1 4h12M1 8.500h8M1 13h5" /><circle cx="14.500" cy="4" r="2" {...st.b} /><circle cx="10" cy="8.500" r="1.300" {...st.g} /><circle cx="6.500" cy="13" r="1.300" {...st.g} /></>,
  <><path d="M6 9h5M8.500 2.500v13M8.500 2.500H11M8.500 15.500H11" /><path d="M.6 7h6v4h-6zM11 .6h6.400V5H11zM11 7h6.400v4H11zM11 13h6.400v4.400H11z" {...st.b} /></>,
  <path d="M.7 1.700h16.600v10.600H8.500l-4 4.500v-4.500H.7z" fill="#fff" stroke={B} />,
  <><path d="M3.500 5V.700H12l4 4v12.600H3.500V9M12 .7v4h4" /><path d="M1.500 5.500h3.500V9H1.500z" {...st.b} /><path d="M6 8.500h6M8 12h5" stroke="#2b88d8" /></>,
  <><path d="M4.500 1h9v7q0 3-4.500 4-4.500-1-4.500-4z" {...st.w} /><path d="M4.500 3H.8q0 5 4.500 6M13.500 3h3.700q0 5-4.500 6M9 12v3" /><path d="M5.500 1h7v2h-7zM4.500 15h9v2.400h-9z" {...st.b} /></>,
  <><path d="M2.500 17.400V.6H11l4.500 4.500v12.300z" fill="#fff" strokeWidth="1.600" /><path d="M11 .6v4.500h4.500" /><path d="M5 16v-5M8 16v-3M11.500 16V9.500" strokeWidth="2" /></>,
  <><path d="M.6 4h16.800v12H.6z" {...st.w} /><text x="4" y="13" fill="#0a78d4" stroke="none" className={`${lbl} text-[8px]`}>123</text><path d="M3 0h4L5 4h3L1.500 11 3 6H0z" fill="#fbc46d" stroke="#e07b12" /></>,
  <><path d="M10 2h6.500v6H10zM1 10.500h6.500v6H1z" {...st.w} /><path d="M9 9h9l-3 4v4.500h-3V13z" {...st.w} /><path d="M3 0h4L5 4h3L1.500 11 3 6H0z" fill="#fbc46d" stroke="#e07b12" /></>,
  <><path d="M7 1h10v7l-4 3-1 4-5 2H2v-6l4-2z" {...st.b} /><path d="M8 16l2-7 5-5" stroke="#fff" strokeWidth="3" /><path d="M.5.500h5v6l-2.500 3-2.500-3z" fill="#e07b12" stroke="#c05e00" strokeWidth=".8" /><circle cx="16" cy="12" r="1.800" fill="#d8690a" stroke="none" /><circle cx="13" cy="16" r="1.800" fill="#d8690a" stroke="none" /></>,
  <g stroke="#9b3fa8"><path d="M9 .8L17.200 9 9 17.200.8 9z" fill="#fff" /><path d="M5 5l8 8M13 5l-8 8" /><circle cx="9" cy="5" r="2" /><circle cx="5" cy="9" r="2" /><circle cx="13" cy="9" r="2" /><circle cx="9" cy="13" r="2" /></g>,
  <g stroke="#2b7fd8"><path d="M1 2h9l7.500 7L10 16H1l7-7z" fill="#fff" /><path d="M4.500 5.500L12 2.500l3 3.500-11 6M4 16l11-6" /></g>,
];

const Toggle = ({ on }: { on?: boolean }) =>
  on ? (
    <span className="flex h-4 w-8 items-center justify-end gap-[4px] rounded-full bg-[#117865] pr-[5px]">
      <svg width="10" height="8" viewBox="0 0 10 8" fill="none" stroke="#fff" strokeWidth="2"><path d="M1 4l3 3 5-6" /></svg>
      <i className="size-2 rounded-full bg-white" />
    </span>
  ) : (
    <span className="flex h-4 w-8 items-center rounded-full border border-[#605e5c] bg-white pl-[4px]"><i className="size-[8px] rounded-full bg-[#605e5c]" /></span>
  );
const Well = ({ children }: Kids) => (
  <div className="ml-[4px] h-7 w-[170px] whitespace-nowrap rounded-[2px] border border-dashed border-[#c8c6c4] bg-white pl-[9px] text-[11.400px] leading-[26px]">{children}</div>
);

const Visualizations = () => (
  <aside className="w-[182px] shrink-0 border-x border-[#e1dfdd] bg-[#f3f2f1] text-[#252423]">
    <div className="flex h-[38px] items-center justify-between pl-[8px] pr-[8px] text-[15px] font-semibold"><span>Visualizações</span><Dbl /></div>
    <div className="h-[19px] pl-[8px] text-[11.3px] font-semibold leading-[16px] tracking-[-0.1px]">Criar visual</div>
    <div className="flex pl-[8px]">
      <div className="flex size-8 items-center justify-center bg-[#d2d0ce]">
        <svg width="24" height="25" viewBox="0 0 24 25"><path d="M0 1h19" stroke="#252423" /><g fill="#117865" stroke="#252423" strokeDasharray="2 1.500"><path d="M.5 5.500h23v7H.5zM.5 16.500h23v7H.5z" /></g></svg>
      </div>
      <svg width="26" height="26" viewBox="0 0 26 26" fill="none" stroke="#252423" strokeWidth="1.300" className="ml-[37px] mt-[3px]"><path d="M7 25H1.500V1.500H13l5.500 5.500v2M13 1.500V7h5.500M24.500 9L13 18.500l2.500 2.500L25 10z" /><path d="M13 18.500q-3 0-3.500 3.500-.5 2-2 2.500 6.500 1.500 8-3.500z" /></svg>
    </div>
    <svg width="180" height="14" viewBox="0 0 180 14" fill="none" stroke="#8a8886" className="block"><path d="M0 12.500h15.500l8-8 8 8H180" /></svg>
    <div className="grid gap-[10px] pl-[11px] pt-[10px] [grid-template-columns:repeat(6,18px)]">
      {vizIcons.map((ic, i) => <svg key={i} width="18" height="18" viewBox="0 0 18 18" fill="none" stroke={D} strokeWidth="1.200" className="block overflow-visible">{ic}</svg>)}
    </div>
    <div className="flex h-[34px] gap-[4px] pl-[13px] pt-[15px]"><i className="size-[2px] bg-[#252423]" /><i className="size-[2px] bg-[#252423]" /><i className="size-[2px] bg-[#252423]" /></div>
    <div className="mx-[6px] border-t border-dashed border-[#d2d0ce]" />
    <div className="h-[38px] border-b border-[#e1dfdd] pl-[11px] pt-[8px]">
      <svg width="18" height="18" viewBox="0 0 18 18" className="block"><rect width="18" height="18" fill="#3b3a39" /><text x="-.5" y="13" fill="#fff" textLength="12" className="text-[8.500px] font-bold">BC</text><path d="M11 12l3-4 4 4z" fill="#3f3" /></svg>
    </div>
    <div className="h-[28px] pl-[11px] pt-[7px] text-[11.3px] leading-4">Valores</div>
    <Well>Adicionar os campos de da...</Well>
    <div className="pl-[11px] pt-[11px] text-[11.3px] font-semibold leading-4 tracking-[-0.1px]">Drill-through</div>
    <div className="flex items-center justify-between pl-[11px] pr-[21px] pt-[9px] text-[11.3px] leading-4"><span>Relatório cruzado</span><Toggle /></div>
    <div className="flex justify-between pl-[11px] pr-[21px] pt-[11px] text-[11.3px] leading-4"><span>Manter todos os<br />filtros</span><Toggle on /></div>
    <div className="pt-[9px]"><Well>Adicionar os campos de dr...</Well></div>
  </aside>
);

const DataPane = () => (
  <aside className="min-w-0 flex-1 overflow-hidden bg-[#f3f2f1] text-[#252423]">
    <div className="flex h-[38px] items-center justify-between pl-[8px] pr-[2px] text-[15px] font-semibold"><span>Dados</span><Dbl /></div>
    <div className="ml-[4px] mt-[8px] flex h-[24px] w-[180px] items-center rounded border border-[#d2d0ce] border-b-[#605e5c] bg-white pl-[12px] text-[13px] text-[#605e5c]">
      <svg width="15" height="15" viewBox="0 0 15 15" fill="none" stroke="#605e5c" strokeWidth="1.100"><circle cx="6" cy="6" r="5" /><path d="M9.500 9.500L14 14" /></svg>
      <span className="ml-[7px]">Pesquisar</span>
    </div>
    <ul className="mt-[9px]">
      {["CalendarioBase", "Clientes", "Hierarquia", "Lotação", "Recursos Humanos"].map((t) => (
        <li key={t} className="flex h-6 items-center whitespace-nowrap pl-[15px] text-[11.300px]">
          <svg width="7" height="12" viewBox="0 0 7 12" fill="none" stroke="#605e5c"><path d="M.8.800L6 6 .8 11.200" /></svg>
          <svg width="13" height="13" viewBox="0 0 13 13" fill="none" stroke="#252423" strokeWidth="1.100" className="ml-[7px] mr-[5px]"><rect x=".7" y=".7" width="11.600" height="11.600" rx="2" /><path d="M.7 4.500h11.600M.7 8.500h11.600M4.500.700v11.600M8.500.700v11.600" /></svg>
          {t}
        </li>
      ))}
    </ul>
  </aside>
);

const StatusBar = () => (
  <footer className="flex h-6 shrink-0 items-center border-t border-[#d9d7d5] bg-[#f3f2f1] pl-[4px] text-[11.3px] text-[#484644]">
    <span className="mr-auto pt-[3px]">Página 6 de 6</span>
    <span className="h-[2px] w-[5px] bg-[#605e5c]" />
    <svg width="100" height="12" viewBox="0 0 100 12" className="mx-[5px]"><path d="M0 6.500h100" stroke="#605e5c" /><path d="M50 1h4v11h-4z" fill="#605e5c" /></svg>
    <svg width="8" height="8" viewBox="0 0 8 8" stroke="#605e5c" className="ml-[1px]"><path d="M4 0v8M0 4h8" /></svg>
    <span className="ml-[14px] w-[41px]">112%</span>
    <svg width="16" height="13" viewBox="0 0 16 13" fill="none" stroke="#605e5c" className="mr-[13px]"><path d="M.5.500h15v12H.5zM3 5V3h2M11 3h2v2M13 8v2h-2M5 10H3V8" /></svg>
  </footer>
);

export default function App() {
  return (
    <div className="flex h-[996px] w-[1915px] flex-col overflow-hidden bg-white font-['Open_Sans','Noto_Sans',sans-serif]">
      <Ribbon />
      <div className="flex h-[847px] shrink-0">
        <NavRail />
        <div className="w-[1517px] shrink-0">
          <div className="flex"><div className="w-[1485px]"><Canvas /></div><Filters /></div>
          <PageTabs />
        </div>
        <Visualizations />
        <DataPane />
      </div>
      <StatusBar />
    </div>
  );
}
